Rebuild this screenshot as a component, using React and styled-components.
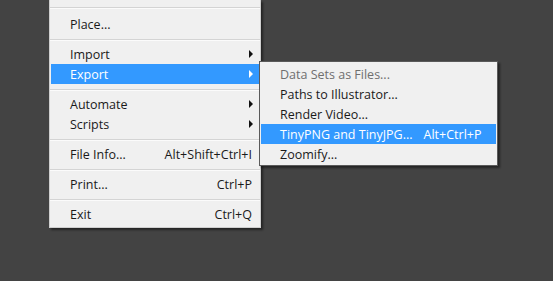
import React from "react";
import styled, { createGlobalStyle } from "styled-components";

const Global = createGlobalStyle`
  html, body {
    margin: 0;
    padding: 0;
    background: #434343;
    overflow: hidden;
  }
  body {
    font-family: "Open Sans", "Noto Sans", sans-serif;
  }
`;

const Screen = styled.div`
  width: 553px;
  height: 281px;
  display: flex;
  align-items: flex-start;
  padding-left: 49px;
  box-sizing: border-box;
`;

const Menu = styled.div`
  width: ${(p) => p.$width}px;
  margin-top: ${(p) => p.$top || 0}px;
  margin-left: ${(p) => p.$left || 0}px;
  padding: ${(p) => p.$pad || "2px 0 3px"};
  background: #f0f0f0;
  box-sizing: border-box;
  border: 1px solid ${(p) => p.$border || "#cfcfcf"};
  border-top: ${(p) => (p.$noTop ? "none" : undefined)};
  box-shadow: 2px 2px 2px rgba(0, 0, 0, 0.45);
  position: relative;
  z-index: ${(p) => p.$z || 1};
`;

const Row = styled.div`
  height: 20px;
  display: flex;
  align-items: center;
  padding: 0 ${(p) => p.$padRight}px 0 19px;
  margin: 0 1px;
  font-size: 12.5px;
  color: ${(p) => (p.$active ? "#ffffff" : p.$disabled ? "#6f6f6f" : "#1a1a1a")};
  background: ${(p) => (p.$active ? "#3399ff" : "transparent")};
  white-space: nowrap;
`;

const Label = styled.span`
  flex: ${(p) => (p.$grow ? 1 : "none")};
`;

const Shortcut = styled.span`
  margin-left: ${(p) => (p.$gap ? p.$gap : 0)}px;
`;

const Arrow = styled.span`
  margin-left: auto;
  margin-right: -1px;
  width: 0;
  height: 0;
  border-top: 4px solid transparent;
  border-bottom: 4px solid transparent;
  border-left: 4px solid ${(p) => (p.$active ? "#ffffff" : "#111111")};
`;

const Separator = styled.div`
  height: ${(p) => p.$h || 10}px;
  display: flex;
  align-items: center;

  &::after {
    content: "";
    flex: 1;
    height: 1px;
    background: #d4d4d4;
    box-shadow: 0 1px 0 #fbfbfb;
  }
`;

function Item({ label, shortcut, arrow, active, disabled, gap, padRight = 7 }) {
  return (
    <Row $active={active} $disabled={disabled} $padRight={padRight}>
      <Label $grow={!gap}>{label}</Label>
      {shortcut && <Shortcut $gap={gap}>{shortcut}</Shortcut>}
      {arrow && <Arrow $active={active} />}
    </Row>
  );
}

export default function App() {
  return (
    <>
      <Global />
      <Screen>
        <Menu $width={212} $noTop $pad="0 0 3px" $z={1}>
          <Separator $h={14} />
          <Item label="Place..." />
          <Separator />
          <Item label="Import" arrow />
          <Item label="Export" arrow active />
          <Separator />
          <Item label="Automate" arrow />
          <Item label="Scripts" arrow />
          <Separator />
          <Item label="File Info..." shortcut="Alt+Shift+Ctrl+I" />
          <Separator />
          <Item label="Print..." shortcut="Ctrl+P" />
          <Separator />
          <Item label="Exit" shortcut="Ctrl+Q" />
        </Menu>
        <Menu $width={239} $top={61} $left={-2} $pad="2px 0 1px" $border="#5a5a5a" $z={2}>
          <Item label="Data Sets as Files..." disabled />
          <Item label="Paths to Illustrator..." />
          <Item label="Render Video..." />
          <Item label="TinyPNG and TinyJPG..." shortcut="Alt+Ctrl+P" gap={11} active padRight={13} />
          <Item label="Zoomify..." />
        </Menu>
      </Screen>
    </>
  );
}
